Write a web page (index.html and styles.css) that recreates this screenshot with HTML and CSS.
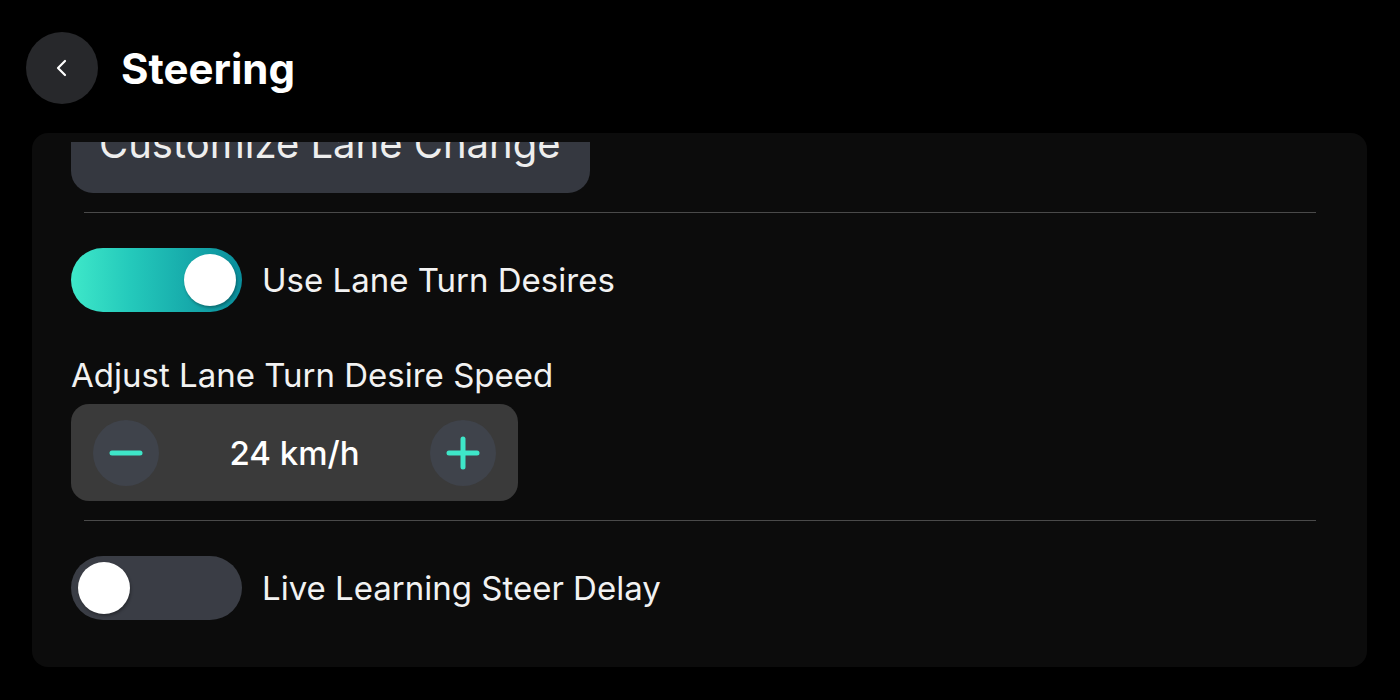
FILE: index.html
```html
<!DOCTYPE html>
<html lang="en">
<head>
    <meta charset="UTF-8">
    <meta name="viewport" content="width=device-width, initial-scale=1.0">
    <title>Steering</title>
    <link rel="stylesheet" href="styles.css">
</head>
<body>
    <!-- header -->
    <div class="header">
        <button class="back-btn" aria-label="Back">
            <svg width="24" height="24" viewBox="0 0 24 24" fill="none" stroke="#fff" stroke-width="2.2" stroke-linecap="round" stroke-linejoin="round">
                <polyline points="15,5 8,12 15,19"></polyline>
            </svg>
        </button>
        <h1>Steering</h1>
    </div>

    <!-- settings panel (list is scrolled, top item is partly hidden) -->
    <div class="panel">
        <div class="scroller">
            <div class="wide-btn">Customize Lane Change</div>
            <div class="divider"></div>

            <div class="toggle-row">
                <div class="toggle on"><div class="knob"></div></div>
                <span class="toggle-label">Use Lane Turn Desires</span>
            </div>

            <div class="setting-label">Adjust Lane Turn Desire Speed</div>
            <div class="stepper">
                <div class="step-btn">
                    <svg width="34" height="34" viewBox="0 0 34 34" stroke="#3ee6c8" stroke-width="5" stroke-linecap="round">
                        <line x1="3" y1="17" x2="31" y2="17"></line>
                    </svg>
                </div>
                <div class="step-value">24 km/h</div>
                <div class="step-btn">
                    <svg width="34" height="34" viewBox="0 0 34 34" stroke="#3ee6c8" stroke-width="5" stroke-linecap="round">
                        <line x1="3" y1="17" x2="31" y2="17"></line>
                        <line x1="17" y1="3" x2="17" y2="31"></line>
                    </svg>
                </div>
            </div>
            <div class="divider"></div>

            <div class="toggle-row">
                <div class="toggle"><div class="knob"></div></div>
                <span class="toggle-label">Live Learning Steer Delay</span>
            </div>
        </div>
    </div>
</body>
</html>
```

FILE: styles.css
```css
body {
    margin: 0;
    background: #000;
    font-family: Inter, "Noto Sans", sans-serif;
    color: #fff;
    height: 700px;
    overflow: hidden;
}

.header {
    display: flex;
    align-items: center;
    padding: 32px 0 0 26px;
    height: 72px;
}

.back-btn {
    width: 72px;
    height: 72px;
    border-radius: 50%;
    border: none;
    background: #27282b;
    display: flex;
    align-items: center;
    justify-content: center;
    padding: 0;
}

.header h1 {
    margin: 0 0 0 23px;
    font-size: 42px;
    font-weight: 700;
}

.panel {
    margin: 29px 33px 0 32px;
    height: 525px;
    padding-top: 9px;
    background: #0c0c0c;
    border-radius: 16px;
}

.scroller {
    height: 100%;
    overflow: hidden;
    padding: 0 39px;
}

.wide-btn {
    width: 491px;
    height: 100px;
    margin-top: -49px;
    padding-left: 28px;
    background: #353840;
    border-radius: 22px;
    display: flex;
    align-items: center;
    font-size: 40px;
    color: #eee;
}

.divider {
    height: 1px;
    background: #4a4a4a;
    margin: 19px 12px 0 13px;
}

.toggle-row {
    display: flex;
    align-items: center;
    margin-top: 35px;
}

.toggle {
    width: 171px;
    height: 64px;
    border-radius: 32px;
    background: #3a3d45;
    display: flex;
    align-items: center;
    padding: 0 7px;
    box-sizing: border-box;
}

.toggle.on {
    background: linear-gradient(to right, #3ee8c9 0%, #24c9bb 35%, #0a8e9c 100%);
    justify-content: flex-end;
    padding: 0 6px;
}

.knob {
    width: 52px;
    height: 52px;
    border-radius: 50%;
    background: #fff;
    box-shadow: 1px 2px 3px rgba(0,0,0,0.3);
}

.toggle-label {
    margin-left: 20px;
    font-size: 33px;
    color: #f2f2f2;
}

.setting-label {
    margin-top: 43px;
    font-size: 33px;
    line-height: 40px;
    color: #f2f2f2;
}

.stepper {
    margin-top: 9px;
    width: 447px;
    height: 97px;
    border-radius: 18px;
    background: #3a3a3a;
    display: flex;
    align-items: center;
    justify-content: space-between;
    padding: 0 22px;
    box-sizing: border-box;
}

.step-btn {
    width: 66px;
    height: 66px;
    border-radius: 50%;
    background: #3f434b;
    display: flex;
    align-items: center;
    justify-content: center;
}

.step-value {
    font-size: 33px;
    font-weight: 500;
    color: #fff;
}
```
